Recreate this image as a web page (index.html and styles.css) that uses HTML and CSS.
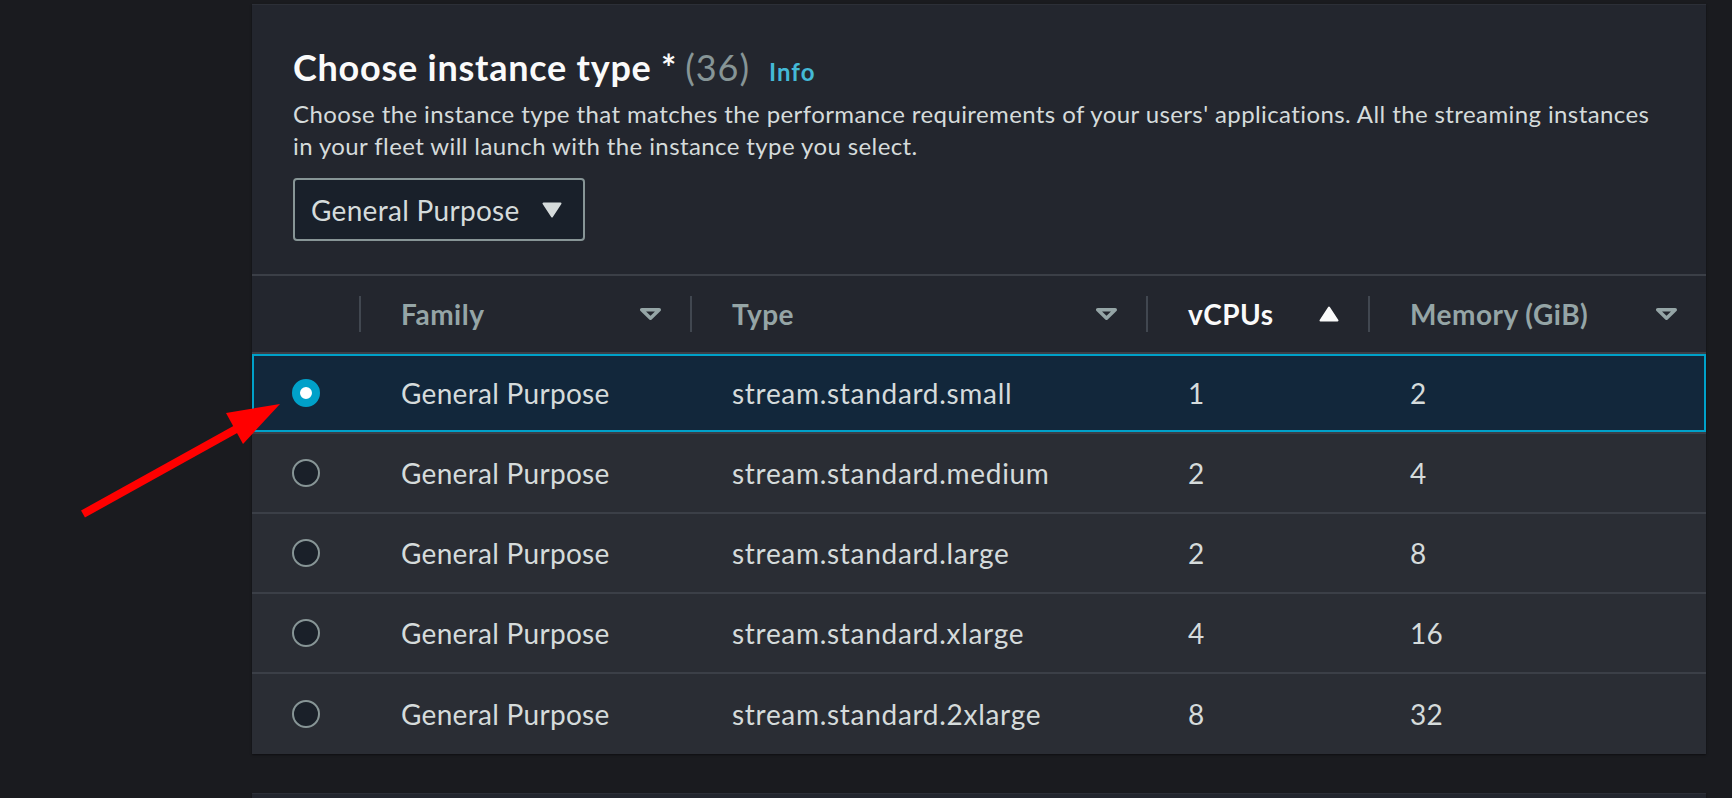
FILE: index.html
```html
<!DOCTYPE html>
<html lang="en">
<head>
<meta charset="utf-8">
<title>Choose instance type</title>
<link rel="stylesheet" href="styles.css">
</head>
<body>
<div class="page">
  <div class="nav-space"></div>
  <main class="content">
    <section class="panel">
      <header class="panel-head">
        <h2 class="title">Choose instance type *<span class="count">(36)</span><a class="info" href="#">Info</a></h2>
        <p class="desc">Choose the instance type that matches the performance requirements of your users' applications. All the streaming instances in your fleet will launch with the instance type you select.</p>
        <div class="select">
          <span>General Purpose</span>
          <svg class="caret" width="20" height="16" viewBox="0 0 20 16"><path d="M1.5 1.5H18.5L10 14.5Z" fill="#d5dbdb" stroke="#d5dbdb" stroke-width="2" stroke-linejoin="round"/></svg>
        </div>
      </header>
      <div class="table">
        <div class="row head">
          <div class="hcell"></div>
          <div class="hcell"><div class="inner"><span>Family</span><svg width="21" height="12" viewBox="0 0 21 12"><path d="M1.75 1.75H19.25L10.5 10.25Z" fill="none" stroke="#95a5a6" stroke-width="3.5" stroke-linejoin="round"/></svg></div></div>
          <div class="hcell"><div class="inner"><span>Type</span><svg width="21" height="12" viewBox="0 0 21 12"><path d="M1.75 1.75H19.25L10.5 10.25Z" fill="none" stroke="#95a5a6" stroke-width="3.5" stroke-linejoin="round"/></svg></div></div>
          <div class="hcell"><div class="inner sorted"><span>vCPUs</span><svg width="20" height="16" viewBox="0 0 20 16"><path d="M10 1.5L18.5 14.5H1.5Z" fill="#fafafa" stroke="#fafafa" stroke-width="2" stroke-linejoin="round"/></svg></div></div>
          <div class="hcell"><div class="inner"><span>Memory (GiB)</span><svg width="21" height="12" viewBox="0 0 21 12"><path d="M1.75 1.75H19.25L10.5 10.25Z" fill="none" stroke="#95a5a6" stroke-width="3.5" stroke-linejoin="round"/></svg></div></div>
        </div>
        <div class="row body selected">
          <div class="cell radio-cell"><span class="radio on"></span></div>
          <div class="cell">General Purpose</div>
          <div class="cell type">stream.standard.small</div>
          <div class="cell">1</div>
          <div class="cell">2</div>
        </div>
        <div class="row body">
          <div class="cell radio-cell"><span class="radio"></span></div>
          <div class="cell">General Purpose</div>
          <div class="cell type">stream.standard.medium</div>
          <div class="cell">2</div>
          <div class="cell">4</div>
        </div>
        <div class="row body">
          <div class="cell radio-cell"><span class="radio"></span></div>
          <div class="cell">General Purpose</div>
          <div class="cell type">stream.standard.large</div>
          <div class="cell">2</div>
          <div class="cell">8</div>
        </div>
        <div class="row body">
          <div class="cell radio-cell"><span class="radio"></span></div>
          <div class="cell">General Purpose</div>
          <div class="cell type">stream.standard.xlarge</div>
          <div class="cell">4</div>
          <div class="cell">16</div>
        </div>
        <div class="row body">
          <div class="cell radio-cell"><span class="radio"></span></div>
          <div class="cell">General Purpose</div>
          <div class="cell type">stream.standard.2xlarge</div>
          <div class="cell">8</div>
          <div class="cell">32</div>
        </div>
      </div>
    </section>
    <section class="panel next"></section>
  </main>
</div>
<svg class="arrow" width="220" height="130" viewBox="70 395 220 130">
  <line x1="83" y1="514" x2="238" y2="428" stroke="#ff0000" stroke-width="8"/>
  <polygon points="280,404 226,413 243,444" fill="#ff0000"/>
</svg>
</body>
</html>
```

FILE: styles.css
```css
* { box-sizing: border-box; }
html, body { margin: 0; padding: 0; }
body {
  background: #1a1b1f;
  font-family: Lato, "Noto Sans", sans-serif;
  color: #d5dbdb;
  width: 1732px;
  height: 798px;
  overflow: hidden;
  position: relative;
}
.page { display: flex; height: 798px; }
.nav-space { width: 252px; flex: none; }
.content {
  width: 1454px;
  flex: none;
  padding-top: 4px;
  display: flex;
  flex-direction: column;
  gap: 39px;
}
.panel {
  background: #23262e;
  box-shadow: 0 1px 2px rgba(0, 0, 0, 0.5), inset 0 1px 0 #2c2f37;
}
.panel.next { flex: 1; }
.panel-head { padding: 41px 41px 33px; }
.title {
  margin: 0;
  font-size: 36px;
  line-height: 44px;
  font-weight: 700;
  letter-spacing: 0.75px;
  color: #fafafa;
  display: flex;
  align-items: baseline;
}
.count { font-weight: 400; color: #879596; margin-left: 8px; letter-spacing: 1px; }
.info {
  font-size: 24px;
  font-weight: 700;
  letter-spacing: 1px;
  color: #44b9d6;
  margin-left: 19px;
  text-decoration: none;
}
.desc {
  margin: 4px 0 0;
  font-size: 24px;
  line-height: 32px;
  letter-spacing: 0.4px;
  color: #d5dbdb;
}
.select {
  margin-top: 16px;
  width: fit-content;
  display: flex;
  align-items: center;
  gap: 22px;
  height: 63px;
  padding: 0 21px 0 16px;
  border: 2px solid #879596;
  border-radius: 4px;
  background: #19202a;
  font-size: 28px;
  letter-spacing: 0.3px;
  color: #d5dbdb;
}
.table { border-top: 2px solid #3b3f47; }
.row {
  display: grid;
  grid-template-columns: 107px 331px 456px 222px 338px;
}
.row.head { height: 76px; }
.row.body {
  height: 80px;
  border-top: 2px solid #3b3f47;
  background: #2a2d34;
}
.row.body:last-child { height: 82px; }
.row.selected {
  background: #12273b;
  box-shadow: inset 0 0 0 2px #00a1c9;
}
.hcell { display: flex; align-items: center; }
.hcell .inner {
  flex: 1;
  height: 36px;
  display: flex;
  align-items: center;
  justify-content: space-between;
  border-left: 2px solid #414750;
  padding: 0 29px 0 40px;
  font-size: 28px;
  font-weight: 700;
  letter-spacing: 0.5px;
  color: #95a5a6;
}
.hcell .inner.sorted { color: #fafafa; }
.cell {
  display: flex;
  align-items: center;
  padding-left: 42px;
  font-size: 28px;
  letter-spacing: 0.3px;
  color: #d5dbdb;
}
.cell.type { letter-spacing: 0.7px; }
.radio-cell { justify-content: center; padding-left: 0; }
.radio {
  width: 28px;
  height: 28px;
  border-radius: 50%;
  border: 2px solid #879596;
  background: #1a2029;
}
.radio.on { border: 8px solid #00a1c9; background: #ffffff; }
.arrow { position: absolute; left: 70px; top: 395px; pointer-events: none; }
```
